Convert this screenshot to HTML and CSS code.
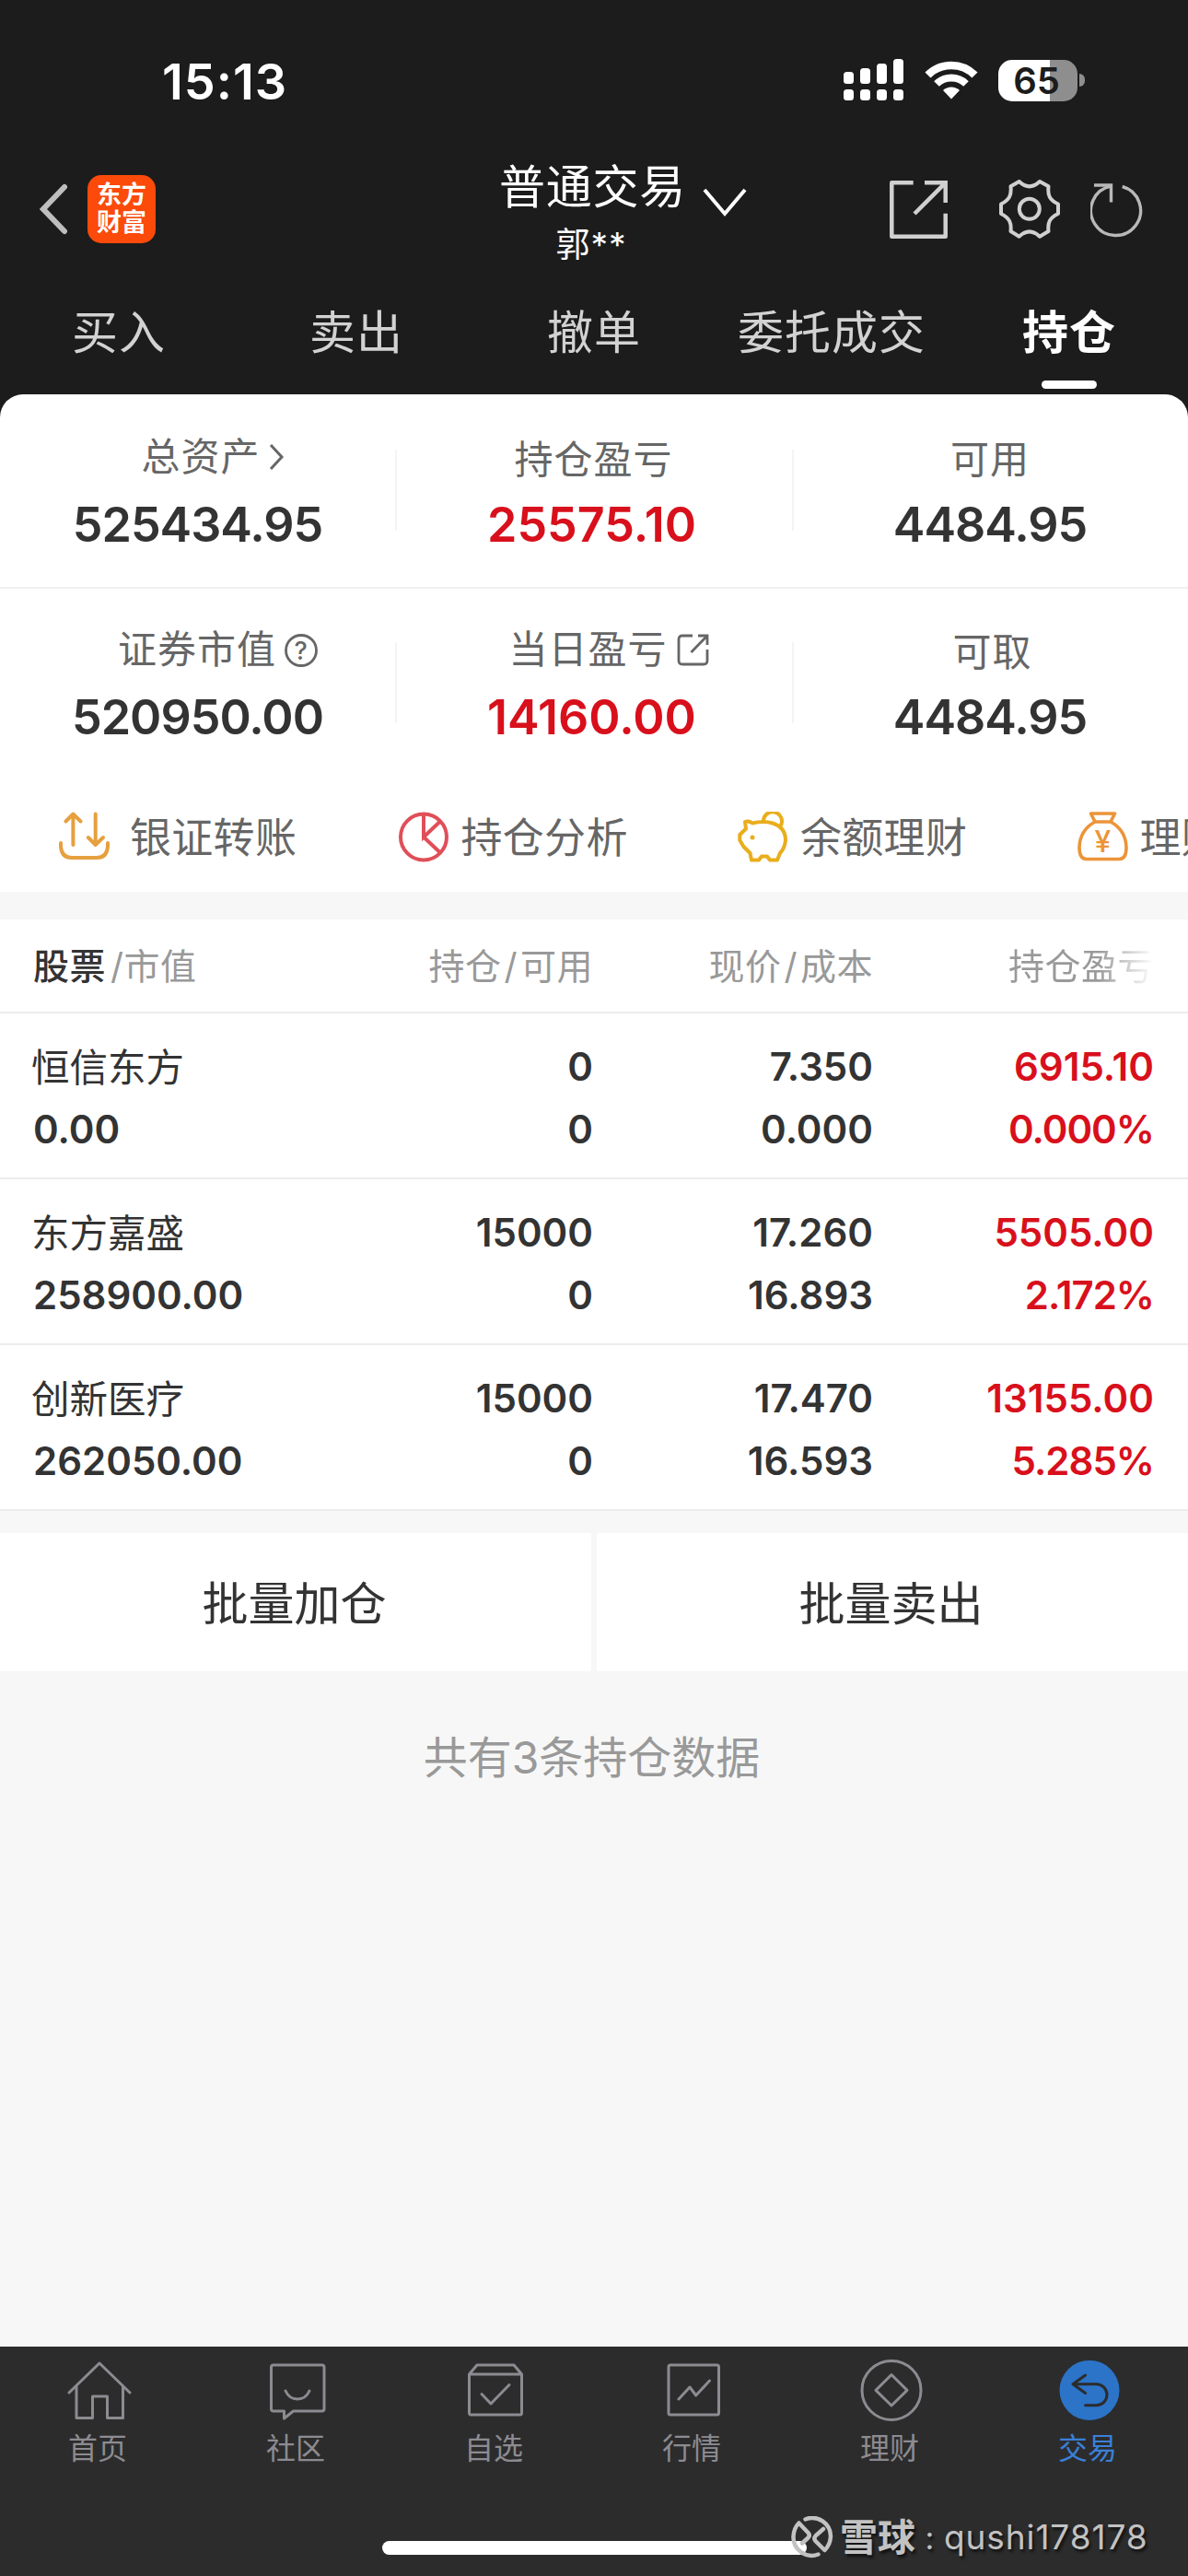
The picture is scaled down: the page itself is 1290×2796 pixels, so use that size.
FILE: index.html
```html
<!DOCTYPE html>
<html lang="zh-CN">
<head>
  <meta charset="UTF-8" />
  <title>持仓</title>
  <meta name="viewport" content="width=device-width, initial-scale=1" />
  <link rel="stylesheet" href="styles.css">
</head>
<body>

  <header class="header">
    <div class="status">
      <span class="time">15:13</span>
      <div class="status-icons">
        <svg class="signal" width="66" height="46" viewBox="0 0 66 46" fill="#fff">
          <rect x="0" y="14" width="11" height="13" rx="3.5" />
          <rect x="18" y="10" width="11" height="17" rx="3.5" />
          <rect x="36" y="5" width="11" height="22" rx="3.5" />
          <rect x="54" y="0" width="11" height="27" rx="3.5" />
          <rect x="0" y="33" width="11" height="12" rx="3.5" />
          <rect x="18" y="33" width="11" height="12" rx="3.5" />
          <rect x="36" y="33" width="11" height="12" rx="3.5" />
          <rect x="54" y="33" width="11" height="12" rx="3.5" />
        </svg>
        <svg class="wifi" width="58" height="44" viewBox="0 0 58 44">
          <path d="M3.5 16.5 A36 36 0 0 1 54.5 16.5" fill="none" stroke="#fff" stroke-width="8.5" />
          <path d="M13 26 A23 23 0 0 1 45 26" fill="none" stroke="#fff" stroke-width="8" />
          <path d="M20 33 A13 13 0 0 1 38 33 L29 42.5 Z" fill="#fff" />
        </svg>
        <div class="battery"><span class="battery-level">65</span></div>
        <span class="battery-cap"></span>
      </div>
    </div>

    <div class="nav">
      <div class="nav-left">
        <svg width="32" height="56" viewBox="0 0 32 56" fill="none" stroke="#bebebe" stroke-width="6" stroke-linecap="round">
          <path d="M27 4 L4 28 L27 52" />
        </svg>
        <div class="logo"><span>东方</span><span>财富</span></div>
      </div>
      <div class="nav-title">
        <div class="title">普通交易</div>
        <div class="account">郭**</div>
      </div>
      <svg class="title-arrow" width="48" height="32" viewBox="0 0 48 32" fill="none" stroke="#fff" stroke-width="4">
        <path d="M2 2 L24 28 L46 2" />
      </svg>
      <div class="nav-right">
        <svg width="63" height="63" viewBox="0 0 63 63" fill="none" stroke="#d0d0d0" stroke-width="4.5" stroke-linejoin="round">
          <path d="M25.7 2.3 H2.3 V60.7 H60.7 V35.7" />
          <path d="M38 2.3 H60.7 V24 M27 36 L60 3" stroke-linejoin="miter" />
        </svg>
        <svg class="gear" width="66" height="64" viewBox="0 0 66 64" fill="none" stroke="#d0d0d0" stroke-width="4" stroke-linejoin="round">
          <path d="M21.7 2 L12.5 7.3 C13.5 17 11 22 2 26.5 V37 C11 41.5 13.5 46.5 12.5 56 L21.7 61.7 C29 54.5 36.5 54.5 44 61.7 L53.5 56 C52.5 46.5 54.5 41.5 64 37 V26.5 C54.5 22 52.5 17 53.5 7.3 L44 2 C36.5 9 29 9 21.7 2 Z" />
          <circle cx="32.8" cy="31.8" r="11" />
        </svg>
        <svg class="refresh" width="58" height="60" viewBox="0 0 58 60" fill="none" stroke="#b8b8b8" stroke-width="3.4">
          <path d="M34.7 4.5 A27 27 0 1 1 22.5 4" />
          <path d="M4 3 H22.5 V21.5" />
        </svg>
      </div>
    </div>

    <div class="tabs">
      <div class="tab">买入</div>
      <div class="tab">卖出</div>
      <div class="tab">撤单</div>
      <div class="tab">委托成交</div>
      <div class="tab tab-active">持仓</div>
    </div>
  </header>

  <main class="main">
    <section class="summary">
      <div class="summary-row">
        <div class="cell">
          <div class="label label-icon">总资产
            <svg class="ic-arrow" width="17" height="30" viewBox="0 0 17 30" fill="none" stroke="#666" stroke-width="3"><path d="M2 2 L14 15 L2 28" /></svg>
          </div>
          <div class="value">525434.95</div>
        </div>
        <div class="cell">
          <div class="label">持仓盈亏</div>
          <div class="value red">25575.10</div>
        </div>
        <div class="cell">
          <div class="label">可用</div>
          <div class="value">4484.95</div>
        </div>
      </div>
      <div class="summary-row">
        <div class="cell">
          <div class="label label-icon label-help">证券市值
            <svg class="ic-help" width="36" height="36" viewBox="0 0 36 36">
              <circle cx="18" cy="18" r="16.5" fill="none" stroke="#666" stroke-width="2.8" />
              <text x="18" y="28" text-anchor="middle" class="help-mark">?</text>
            </svg>
          </div>
          <div class="value">520950.00</div>
        </div>
        <div class="cell">
          <div class="label label-icon">当日盈亏
            <svg class="ic-link" width="35" height="35" viewBox="0 0 35 35" fill="none" stroke="#666" stroke-width="2.8">
              <path d="M17 2 H6 Q2 2 2 6 V29 Q2 33 6 33 H29 Q33 33 33 29 V17" />
              <path d="M23 2 H33 V12 M15.5 20 L33 2" />
            </svg>
          </div>
          <div class="value red">14160.00</div>
        </div>
        <div class="cell">
          <div class="label label-right">可取</div>
          <div class="value">4484.95</div>
        </div>
      </div>

      <div class="actions">
        <div class="action action-first">
          <svg width="55" height="55" viewBox="0 0 55 55" fill="none" stroke="#e6a03f" stroke-width="4" stroke-linecap="round" stroke-linejoin="round">
            <path d="M15.4 36 V3 M7.5 10.5 L15.4 2.5 L23.5 10.5" />
            <path d="M39.7 2.5 V35.5 M31.8 28 L39.7 36 L48 28" />
            <path d="M2 34 V38 Q3 50 14 50 H41 Q52 50 53 38 V34" />
          </svg>
          <span>银证转账</span>
        </div>
        <div class="action">
          <svg width="55" height="55" viewBox="0 0 55 55" fill="none" stroke="#e04f58" stroke-width="4">
            <circle cx="27" cy="27.5" r="25" />
            <path d="M27 2 V27.5 L45 10.5 M27 27.5 L45 44.5" />
          </svg>
          <span>持仓分析</span>
        </div>
        <div class="action">
          <svg width="55" height="55" viewBox="0 0 55 55" fill="none" stroke="#e9ae1c" stroke-width="4" stroke-linejoin="round">
            <path d="M8 11 Q12 9.5 16 12.5 Q28 9.5 38 12.5 Q52 17 52 31 Q51 40 46 45 L43 52.5 H35 L32 48.5 H26 L23 52.5 H15 L13.5 45 L6.5 38 L2.3 31 V25 L9 18.5 Z" />
            <path d="M28 11 A10 10 0 1 1 46.5 15.5" />
            <circle cx="16" cy="28" r="2.5" fill="#e9ae1c" stroke="none" />
          </svg>
          <span>余额理财</span>
        </div>
        <div class="action">
          <svg width="55" height="55" viewBox="0 0 55 55" fill="none" stroke="#ec9438" stroke-width="3.6" stroke-linejoin="round">
            <path d="M14.5 2 H40.5 L36 11 H19 Z" />
            <path d="M19 11 Q2.500 20 2 39 Q2 51.5 10 51.5 H45 Q53 51.5 53 39 Q52.5 20 36 11" />
            <text x="27.5" y="44" text-anchor="middle" class="yuan">¥</text>
          </svg>
          <span>理财</span>
        </div>
      </div>
    </section>

    <section class="holdings">
      <div class="row-head">
        <div><b>股票</b>/市值</div>
        <div>持仓<i>/</i>可用</div>
        <div>现价<i>/</i>成本</div>
        <div class="fade">持仓盈亏</div>
      </div>
      <div class="row">
        <div><span class="name">恒信东方</span>0.00</div>
        <div><span>0</span>0</div>
        <div><span>7.350</span>0.000</div>
        <div class="red"><span>6915.10</span><span class="rate">0.000%</span></div>
      </div>
      <div class="row">
        <div><span class="name">东方嘉盛</span>258900.00</div>
        <div><span>15000</span>0</div>
        <div><span>17.260</span>16.893</div>
        <div class="red"><span>5505.00</span><span class="rate">2.172%</span></div>
      </div>
      <div class="row">
        <div><span class="name">创新医疗</span>262050.00</div>
        <div><span>15000</span>0</div>
        <div><span>17.470</span>16.593</div>
        <div class="red"><span>13155.00</span><span class="rate">5.285%</span></div>
      </div>
    </section>

    <div class="batch">
      <div class="batch-btn">批量加仓</div>
      <div class="batch-btn">批量卖出</div>
    </div>

    <p class="count">共有3条持仓数据</p>
  </main>

  <footer class="tabbar">
    <div class="tabbar-items">
      <div class="item">
        <svg width="70" height="70" viewBox="0 0 70 70"><path d="M2 38 L35 6 L68 38 M10 31 V65.5 H27.5 V42 H43.5 V65.5 H60.5 V31" /></svg>
        <span>首页</span>
      </div>
      <div class="item">
        <svg width="70" height="70" viewBox="0 0 70 70"><path d="M9 8 H61.5 Q64 8 64 10.5 V55.5 Q64 58 61.5 58 H30.5 L20.5 66 V58 H9 Q6.5 58 6.5 55.5 V10.5 Q6.5 8 9 8 Z M22 36 Q26 45 35 45 Q44 45 48 36" /></svg>
        <span>社区</span>
      </div>
      <div class="item">
        <svg width="70" height="70" viewBox="0 0 70 70"><path d="M6.5 18 L15 8 H55 L63.5 18 V60 Q63.5 62 61.5 62 H8.5 Q6.5 62 6.5 60 Z M6.5 18 H63.5 M20 39.5 L30 50 L50 29.5" /></svg>
        <span>自选</span>
      </div>
      <div class="item">
        <svg width="70" height="70" viewBox="0 0 70 70"><rect x="8" y="8" width="54.5" height="54" rx="2" /><path d="M19 45 L31 32 L37.7 41 L52.5 25" /></svg>
        <span>行情</span>
      </div>
      <div class="item">
        <svg width="70" height="70" viewBox="0 0 70 70"><circle cx="35" cy="35.4" r="32" /><path d="M35 18.5 L52 35.4 L35 52 L18 35.4 Z" /></svg>
        <span>理财</span>
      </div>
      <div class="item item-active">
        <svg width="70" height="70" viewBox="0 0 70 70"><circle cx="35" cy="35.4" r="32.5" class="disc" /><path d="M30.6 19 L17 28.7 L30.6 38.5 M17 28.7 H42.5 A11.5 11.5 0 0 1 42.5 51.7 H30.6" class="back" /></svg>
        <span>交易</span>
      </div>
    </div>
    <div class="home-bar"></div>
  </footer>

  <div class="watermark">
    <svg width="46" height="46" viewBox="0 0 46 46" fill="none" stroke="#c2c2c2" stroke-width="4.5" stroke-linejoin="round" stroke-linecap="round">
      <path d="M15.5 3.5 A20 20 0 0 1 43 22 Q42.5 31 36.5 37 L26.5 27 Q24 24 27 21 L35 14" />
      <path d="M29.5 41.5 A20 20 0 0 1 2.5 22 Q3 13 8.5 7.5 L18.5 18 Q21 21 18.5 23.5 L12 29.5" />
    </svg>
    <span class="wm-name">雪球</span>
    <span class="wm-colon">:</span>
    <span class="wm-user">qushi178178</span>
  </div>

</body>
</html>
```

FILE: styles.css
```css
* {
  box-sizing: border-box;
}
body {
  margin: 0;
  width: 1290px;
  height: 2796px;
  display: flex;
  flex-direction: column;
  position: relative;
  overflow: hidden;
  background: #f7f7f7;
  color: #333;
  font-family: Inter, "Noto Sans CJK SC", sans-serif;
}
svg {
  display: block;
  flex: none;
}

/* header */
.header {
  height: 428px;
  background: #1c1c1c;
  color: #fff;
}
.status {
  height: 174px;
  padding: 0 112px 0 176px;
  display: flex;
  align-items: center;
  justify-content: space-between;
}
.time {
  padding-top: 2px;
  font-size: 54px;
  font-weight: 600;
  letter-spacing: 1px;
}
.status-icons {
  display: flex;
  align-items: center;
}
.wifi {
  margin: 0 22px;
}
.battery {
  width: 86px;
  height: 45px;
  border-radius: 15px;
  background: linear-gradient(90deg, #fff 65%, #8e8e8e 65%);
  color: #1c1c1c;
  font-size: 40px;
  font-weight: 600;
  line-height: 45px;
  text-align: center;
}
.battery-level {
  margin-right: 3px;
}
.battery-cap {
  width: 6px;
  height: 14px;
  margin-left: 2px;
  border-radius: 0 6px 6px 0;
  background: #8e8e8e;
}
.nav {
  height: 126px;
  display: flex;
}
.nav-left {
  width: 542px;
  height: 106px;
  padding-left: 43px;
  display: flex;
  align-items: center;
}
.logo {
  width: 74px;
  height: 74px;
  margin-left: 20px;
  border-radius: 15px;
  background: #fb4a0a;
  display: flex;
  flex-direction: column;
  align-items: center;
  justify-content: center;
  font-size: 27px;
  font-weight: 700;
  line-height: 30px;
}
.nav-title {
  width: 203px;
  text-align: center;
}
.title {
  font-size: 50px;
  line-height: 58px;
  letter-spacing: 0.7px;
  white-space: nowrap;
}
.account {
  font-size: 37px;
  line-height: 67px;
  letter-spacing: 1px;
  padding-right: 3px;
}
.title-arrow {
  margin: 30px 0 0 18px;
}
.nav-right {
  height: 106px;
  margin-left: auto;
  padding-right: 48px;
  display: flex;
  align-items: center;
}
.nav-right svg {
  margin-top: 1px;
}
.nav-right .gear {
  margin: 0 33px 0 56px;
}
.tabs {
  display: grid;
  grid-template-columns: repeat(5, 1fr);
}
.tab {
  height: 128px;
  padding-top: 10px;
  color: #d2d2d2;
  font-size: 50px;
  line-height: 103px;
  letter-spacing: 1px;
  text-align: center;
}
.tab-active {
  color: #fff;
  font-weight: 700;
}
.tab-active::after {
  content: "";
  display: block;
  width: 60px;
  height: 9px;
  margin: 0 auto;
  border-radius: 5px;
  background: #fff;
}

/* assets */
.main {
  flex: 1;
  background: linear-gradient(#1c1c1c 40px, transparent 40px);
}
.summary {
  height: 540px;
  border-radius: 25px 25px 0 0;
  background: #fff;
  overflow: hidden;
}
.summary-row {
  height: 209px;
  padding-top: 39px;
  display: grid;
  grid-template-columns: 429px 431px 430px;
}
.summary-row:first-child {
  height: 211px;
  padding-top: 41px;
  border-bottom: 2px solid #f0f0f0;
}
.cell {
  text-align: center;
}
.cell + .cell {
  background: linear-gradient(#f4f4f4, #f4f4f4) no-repeat left 19px / 2px 88px;
}
.label {
  height: 71px;
  color: #666;
  font-size: 42px;
  line-height: 59px;
  letter-spacing: 1px;
}
.label-icon {
  display: flex;
  justify-content: center;
  padding-left: 33px;
  line-height: 54px;
}
.label-help {
  padding-left: 44px;
}
.label-right {
  padding-left: 5px;
}
.ic-arrow {
  margin: 12px 0 0 9px;
}
.ic-help {
  margin: 10px 0 0 9px;
}
.ic-link {
  margin: 10px 0 0 10px;
}
.help-mark {
  fill: #666;
  font-size: 27px;
  font-weight: 500;
}
.value {
  font-size: 52px;
  font-weight: 600;
  line-height: 60px;
  letter-spacing: -1px;
}
.value.red {
  letter-spacing: 0;
  padding-right: 4px;
}
.red {
  color: #d8101c;
}

/* shortcuts */
.actions {
  height: 120px;
  padding-left: 64px;
  display: flex;
  overflow: hidden;
}
.action {
  flex: none;
  width: 368.5px;
  display: flex;
  align-items: center;
  gap: 13px;
  color: #666;
  font-size: 45px;
  letter-spacing: 0.3px;
  white-space: nowrap;
}
.action span {
  padding-bottom: 4px;
}
.action-first {
  gap: 22px;
}
.yuan {
  fill: #ec9438;
  stroke: none;
  font-size: 32px;
  font-weight: 500;
}

/* holdings */
.holdings {
  margin-top: 30px;
  background: #fff;
}
.row-head,
.row {
  padding: 24px 37px 0 36px;
  display: grid;
  grid-template-columns: 302px 306px 304px 305px;
  border-bottom: 2px solid #ececec;
  text-align: right;
}
.row-head {
  height: 102px;
  padding-top: 4px;
  color: #999;
  font-size: 39px;
  line-height: 94px;
  letter-spacing: 0.5px;
}
.row-head b {
  color: #333;
  font-weight: 500;
  margin-right: 5px;
}
.row-head i {
  font-style: normal;
  margin: 0 3px;
}
.row-head > :first-child,
.row > :first-child {
  text-align: left;
}
.fade {
  background: linear-gradient(90deg, #999 80%, #fff 100%);
  -webkit-background-clip: text;
  background-clip: text;
  color: transparent;
}
.row {
  height: 180px;
  font-size: 42px;
  font-weight: 600;
  line-height: 68px;
}
.row span {
  display: block;
}
.row .name {
  margin-left: -2px;
  padding-top: 2px;
  line-height: 66px;
  font-size: 41.5px;
  font-weight: 400;
}
.row .rate {
  letter-spacing: -1px;
}
.batch {
  margin-top: 24px;
  display: grid;
  grid-template-columns: 1fr 1fr;
  gap: 6px;
}
.batch-btn {
  height: 150px;
  padding: 2px 3px 0 0;
  background: #fff;
  font-size: 50px;
  line-height: 150px;
  text-align: center;
}
.count {
  margin: 64px 5px 0 0;
  color: #999;
  font-size: 48px;
  line-height: 60px;
  text-align: center;
}

/* bottom tab bar */
.tabbar {
  height: 249px;
  padding-top: 12px;
  background: #2c2c2c;
}
.tabbar-items {
  display: grid;
  grid-template-columns: repeat(6, 1fr);
}
.item {
  display: flex;
  flex-direction: column;
  align-items: center;
  gap: 4px;
  color: #8c8b91;
  font-size: 32px;
  line-height: 50px;
}
.item span {
  padding-right: 3px;
}
.item svg {
  fill: none;
  stroke: #8c8b91;
  stroke-width: 3px;
  stroke-linejoin: round;
  stroke-linecap: round;
}
.item-active {
  color: #3a80d8;
}
.item .disc {
  fill: #2b74c8;
  stroke: none;
}
.item .back {
  stroke: #2c2c2c;
  stroke-width: 3px;
}
.home-bar {
  width: 461px;
  height: 15px;
  margin: 75px auto 0;
  border-radius: 8px;
  background: #fff;
}
.watermark {
  position: absolute;
  left: 859px;
  top: 2731px;
  height: 46px;
  display: flex;
  align-items: center;
  color: #c2c2c2;
  text-shadow: 2px 3px 3px #111;
}
.wm-name {
  margin-left: 7px;
  padding-bottom: 6px;
  font-size: 41px;
  font-weight: 700;
}
.wm-colon {
  width: 31px;
  text-align: center;
  font-size: 34px;
}
.wm-user {
  padding-bottom: 2px;
  font-size: 37px;
  letter-spacing: 0.9px;
}
```
